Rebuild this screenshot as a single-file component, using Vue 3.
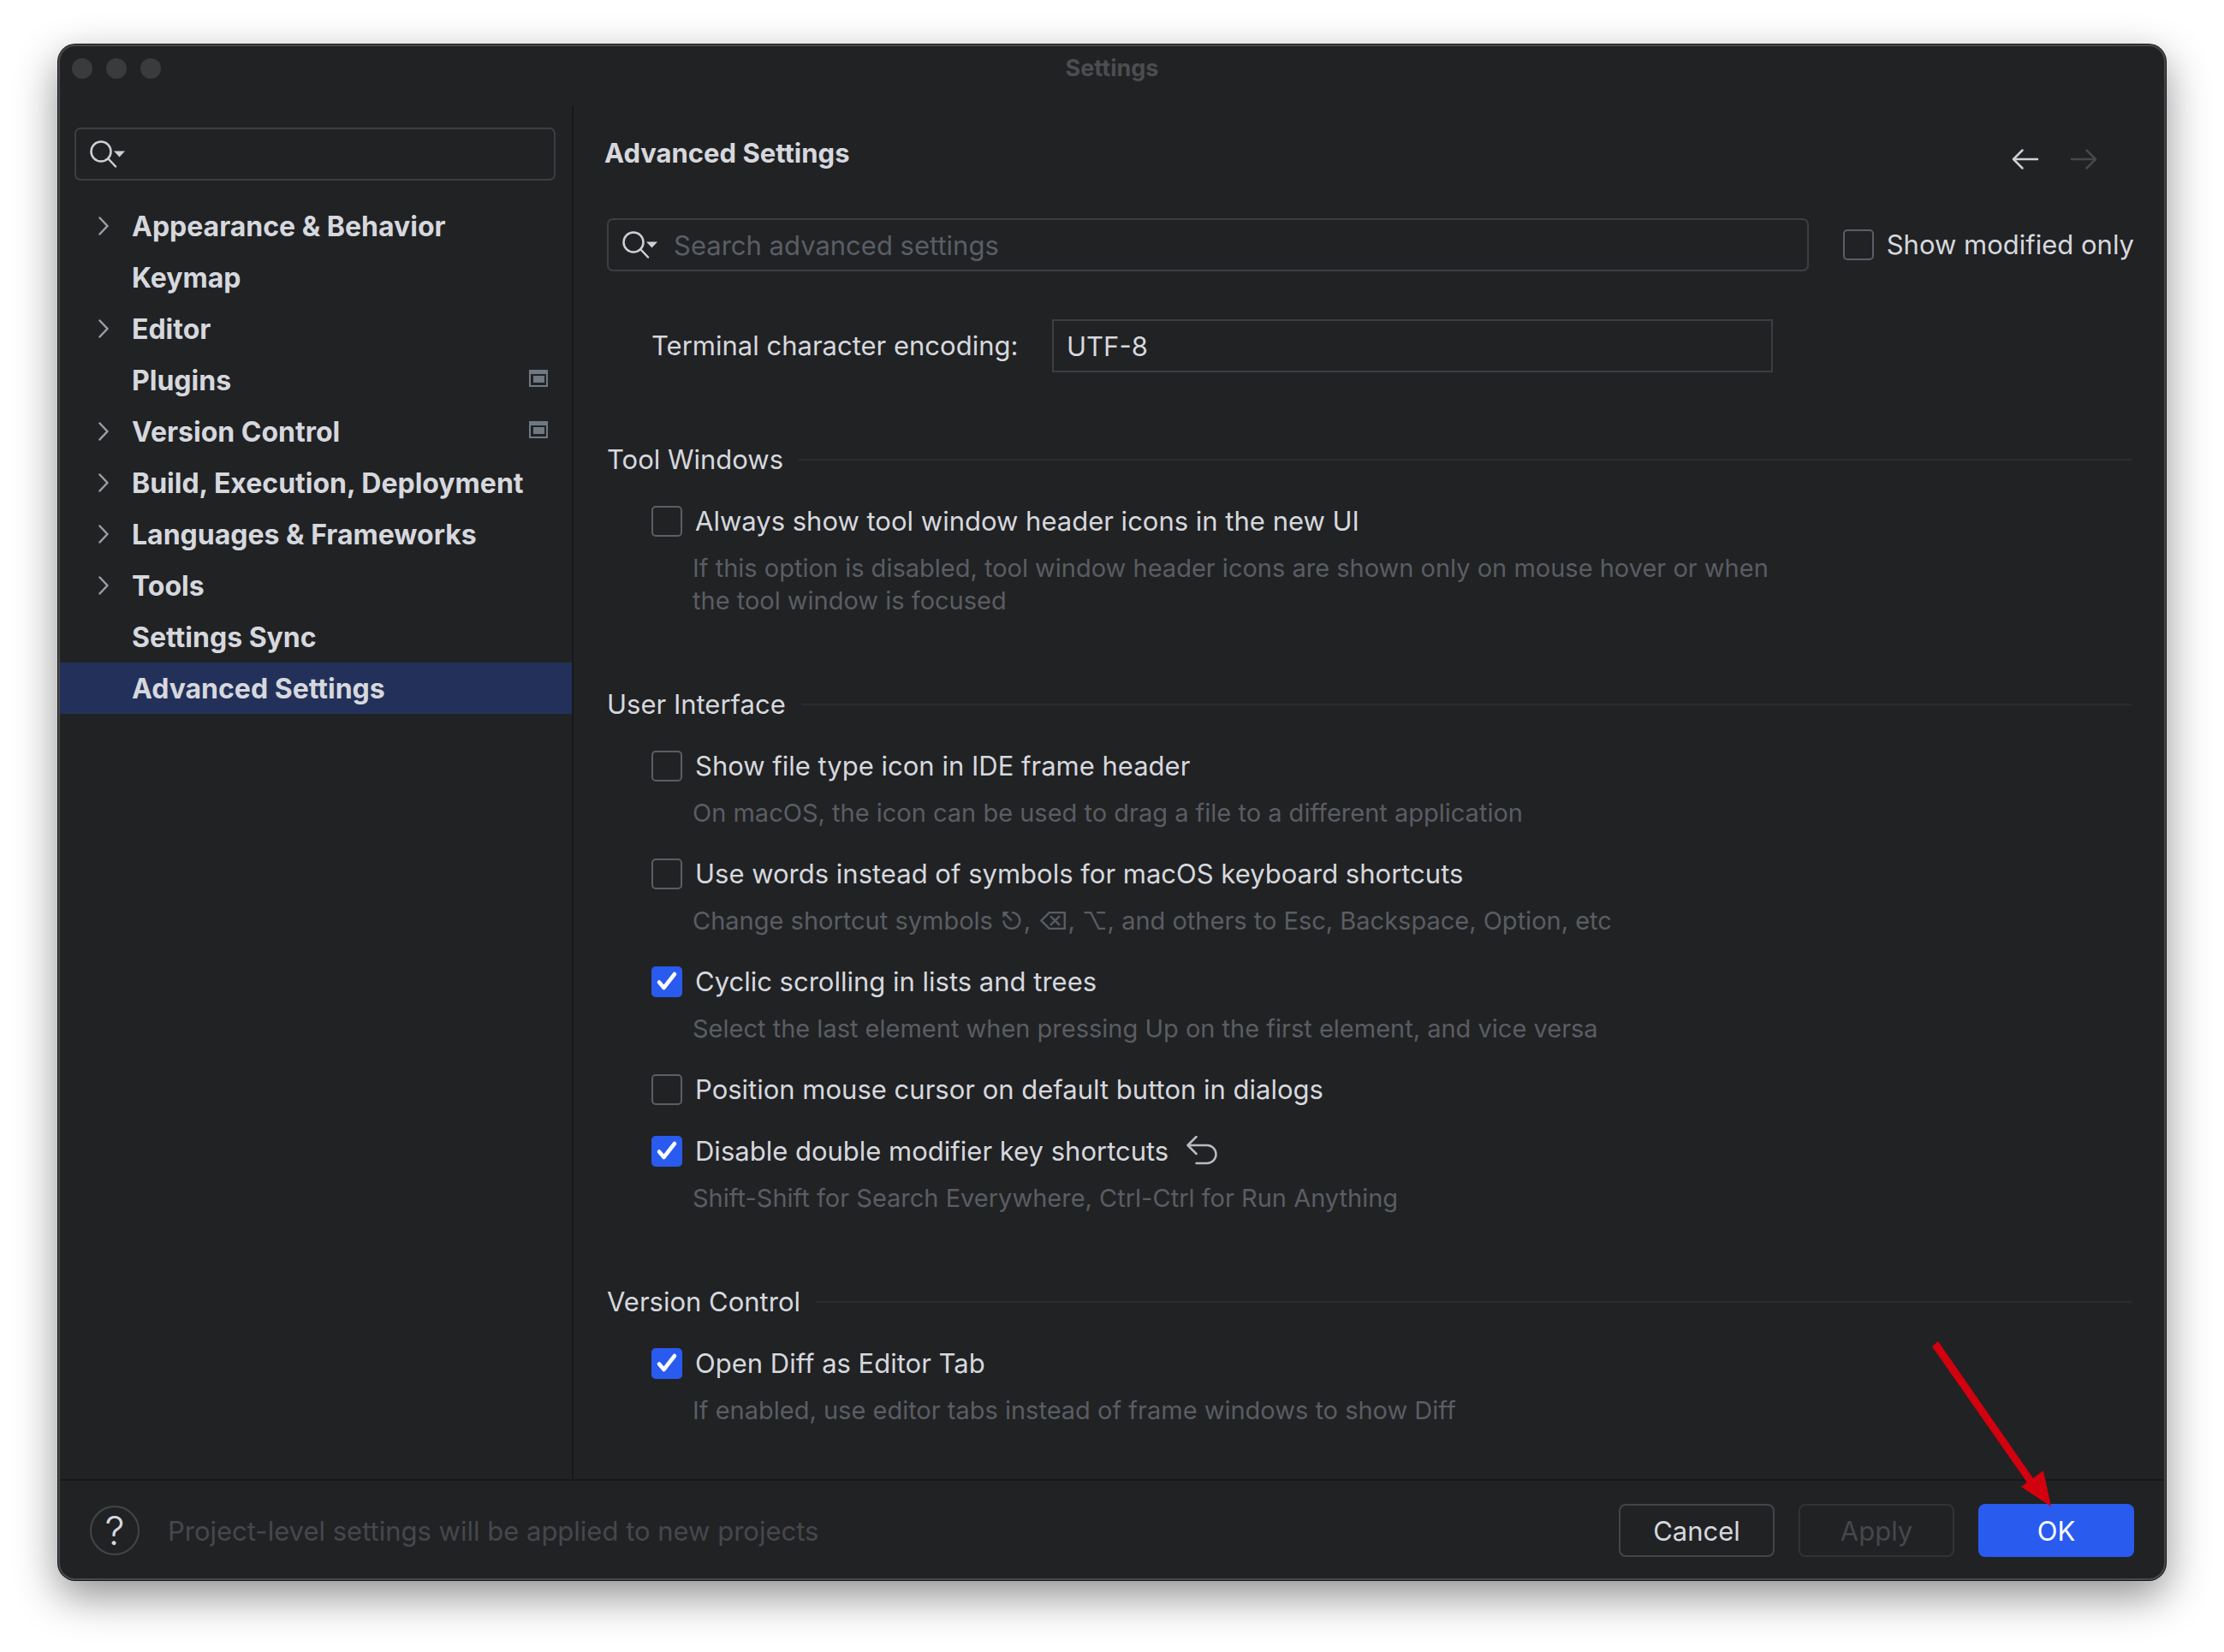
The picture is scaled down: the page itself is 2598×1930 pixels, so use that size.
<script setup>
import { ref } from 'vue'

const tree = [
  { name: 'Appearance & Behavior', expandable: true },
  { name: 'Keymap' },
  { name: 'Editor', expandable: true },
  { name: 'Plugins', badge: true },
  { name: 'Version Control', expandable: true, badge: true },
  { name: 'Build, Execution, Deployment', expandable: true },
  { name: 'Languages & Frameworks', expandable: true },
  { name: 'Tools', expandable: true },
  { name: 'Settings Sync' },
  { name: 'Advanced Settings', selected: true },
]

const groups = ref([
  {
    title: 'Tool Windows',
    options: [
      {
        id: 'header-icons',
        label: 'Always show tool window header icons in the new UI',
        hint: 'If this option is disabled, tool window header icons are shown only on mouse hover or when the tool window is focused',
        on: false,
      },
    ],
  },
  {
    title: 'User Interface',
    options: [
      {
        id: 'file-icon',
        label: 'Show file type icon in IDE frame header',
        hint: 'On macOS, the icon can be used to drag a file to a different application',
        on: false,
      },
      {
        id: 'words',
        label: 'Use words instead of symbols for macOS keyboard shortcuts',
        hint: 'Change shortcut symbols ⎋, ⌫, ⌥, and others to Esc, Backspace, Option, etc',
        on: false,
      },
      {
        id: 'cyclic',
        label: 'Cyclic scrolling in lists and trees',
        hint: 'Select the last element when pressing Up on the first element, and vice versa',
        on: true,
      },
      { id: 'cursor', label: 'Position mouse cursor on default button in dialogs', on: false },
      {
        id: 'double-modifier',
        label: 'Disable double modifier key shortcuts',
        hint: 'Shift-Shift for Search Everywhere, Ctrl-Ctrl for Run Anything',
        on: true,
        modified: true,
      },
    ],
  },
  {
    title: 'Version Control',
    options: [
      {
        id: 'diff-tab',
        label: 'Open Diff as Editor Tab',
        hint: 'If enabled, use editor tabs instead of frame windows to show Diff',
        on: true,
      },
    ],
  },
])

const modifiedOnly = ref(false)
const encoding = ref('UTF-8')
</script>

<template>
  <div class="desktop">
    <div class="window">
      <header class="titlebar">
        <div class="lights"><span></span><span></span><span></span></div>
        <div class="window-title">Settings</div>
      </header>

      <div class="body">
        <aside class="sidebar">
          <label class="search side-search">
            <svg class="search-icon" viewBox="0 0 42 36">
              <circle cx="13" cy="14" r="11.5" />
              <path d="M21.5 22.5 30 31.500" />
              <path class="caret" d="M28 13.500h13l-6.500 7z" />
            </svg>
            <input type="text" aria-label="Search settings" />
          </label>
          <nav class="tree">
            <a
              v-for="item in tree"
              :key="item.name"
              href="#"
              class="tree-row"
              :class="{ selected: item.selected }"
            >
              <svg class="chevron" viewBox="0 0 12 22">
                <path v-if="item.expandable" d="M1.500 1.500 10.500 11l-9 9.500" />
              </svg>
              <span class="tree-name">{{ item.name }}</span>
              <svg v-if="item.badge" class="badge" viewBox="0 0 22 20">
                <path fill-rule="evenodd" d="M0 0h22v20H0zM2 5v13h18V5z" />
                <path d="M5 7h13v8H5z" />
              </svg>
            </a>
          </nav>
        </aside>

        <main class="main">
          <div class="page-head">
            <h1>Advanced Settings</h1>
            <div class="history">
              <button type="button" aria-label="Back">
                <svg viewBox="0 0 32 26"><path d="M30 13H2M12.500 2.500 2 13l10.500 10.500" /></svg>
              </button>
              <button type="button" aria-label="Forward" disabled>
                <svg viewBox="0 0 32 26"><path d="M2 13h28M19.500 2.500 30 13 19.500 23.500" /></svg>
              </button>
            </div>
          </div>

          <div class="filter-row">
            <label class="search main-search">
              <svg class="search-icon" viewBox="0 0 42 36">
                <circle cx="13" cy="14" r="11.5" />
                <path d="M21.5 22.5 30 31.500" />
                <path class="caret" d="M28 13.500h13l-6.500 7z" />
              </svg>
              <input type="text" placeholder="Search advanced settings" />
            </label>
            <label class="check">
              <span class="box">
                <input v-model="modifiedOnly" type="checkbox" />
                <svg v-if="modifiedOnly" viewBox="0 0 36 36"><path d="M9 18.500 14.500 25 27 9" /></svg>
              </span>
              Show modified only
            </label>
          </div>

          <div class="field-row">
            <label for="encoding">Terminal character encoding:</label>
            <input id="encoding" v-model="encoding" type="text" />
          </div>

          <section v-for="group in groups" :key="group.title" class="group">
            <h2>{{ group.title }}</h2>
            <div v-for="option in group.options" :key="option.id" class="option">
              <div class="option-line">
                <label class="check">
                  <span class="box">
                    <input v-model="option.on" type="checkbox" />
                    <svg v-if="option.on" viewBox="0 0 36 36"><path d="M9 18.500 14.500 25 27 9" /></svg>
                  </span>
                  {{ option.label }}
                </label>
                <button v-if="option.modified" class="reset" type="button" aria-label="Reset">
                  <svg viewBox="0 0 38 36">
                    <path d="M12.500 1 2.500 11l10 10M2.500 11H25a10.500 10.500 0 0 1 0 21H12.500" />
                  </svg>
                </button>
              </div>
              <p v-if="option.hint">{{ option.hint }}</p>
            </div>
          </section>
        </main>
      </div>

      <footer class="footer">
        <button class="help" type="button" aria-label="Help">?</button>
        <span class="note">Project-level settings will be applied to new projects</span>
        <div class="actions">
          <button class="btn" type="button">Cancel</button>
          <button class="btn" type="button" disabled>Apply</button>
          <div class="ok-wrap">
            <button class="btn primary" type="button">OK</button>
            <svg class="pointer" viewBox="0 0 140 194">
              <path d="M4 6 11 0 122 160 134 151 143 193 108 170 115 165z" />
            </svg>
          </div>
        </div>
      </footer>
    </div>
  </div>
</template>

<style>
body {
  margin: 0;
  background: #fff;
}
</style>

<style scoped>
* {
  box-sizing: border-box;
}

.desktop {
  display: flex;
  min-height: 100vh;
  padding: 52px 68px 84px;
  overflow: hidden;
  background: #fff;
  color: #d6d8de;
  font: 400 31px/40px Inter, 'Liberation Sans', sans-serif;
}

.window {
  flex: 1;
  min-width: 0;
  display: flex;
  flex-direction: column;
  border: 2px solid #48494b;
  border-radius: 20px;
  background: #212224;
  box-shadow: 0 0 0 1px #141516, 0 18px 50px rgba(0, 0, 0, 0.45);
}

button,
input {
  margin: 0;
  padding: 0;
  border: 0;
  background: none;
  color: inherit;
  font: inherit;
  outline: none;
}

svg {
  display: block;
  flex: none;
  fill: none;
  stroke-linecap: round;
  stroke-linejoin: round;
}

/* Title bar */
.titlebar {
  display: grid;
  grid-template-columns: 1fr auto 1fr;
  height: 70px;
  padding: 14px 14px 0;
}

.lights {
  display: flex;
  gap: 16px;
}

.lights span {
  width: 24px;
  height: 24px;
  border-radius: 50%;
  background: #3a3b3d;
}

.window-title {
  color: #4c4d50;
  font-size: 27px;
  font-weight: 700;
  line-height: 24px;
}

/* Sidebar */
.body {
  flex: 1;
  display: flex;
}

.sidebar {
  flex: none;
  width: 600px;
  padding-top: 25px;
  border-right: 2px solid #17181a;
}

.search {
  display: flex;
  align-items: center;
  gap: 18px;
  height: 62px;
  padding: 2px 16px 0;
  border: 2px solid #3c3e44;
  border-radius: 7px;
}

.search input {
  flex: 1;
  min-width: 0;
}

.search input::placeholder {
  color: #5a5e65;
  opacity: 1;
}

.search-icon {
  width: 42px;
  height: 36px;
  stroke: #ced0d6;
  stroke-width: 2.5;
}

.caret {
  fill: #ced0d6;
  stroke: none;
}

.side-search {
  margin: 0 19px 23px 17px;
}

.tree-row {
  display: flex;
  align-items: center;
  height: 60px;
  padding: 0 28px 0 45px;
  color: inherit;
  font-size: 32px;
  font-weight: 700;
  text-decoration: none;
  white-space: nowrap;
}

.tree-row.selected {
  background: #23315a;
}

.chevron {
  width: 12px;
  height: 22px;
  margin-right: 27px;
  stroke: #9b9ea6;
  stroke-width: 2.5;
}

.tree-name {
  flex: 1;
  padding-top: 2px;
}

.badge {
  width: 22px;
  height: 20px;
  margin-bottom: 4px;
  fill: #6f7982;
}

/* Page */
.main {
  flex: 1;
  min-width: 0;
  padding: 35px 38px 0 39px;
}

.page-head {
  display: flex;
  justify-content: space-between;
  margin: 0 40px 56px -3px;
}

h1,
h2,
p {
  margin: 0;
  font-size: inherit;
  font-weight: inherit;
}

h1 {
  font-weight: 700;
}

.history {
  display: flex;
  gap: 36px;
  padding-top: 14px;
}

.history svg {
  width: 32px;
  height: 26px;
  stroke: #ced0d6;
  stroke-width: 2.5;
}

.history button:disabled svg {
  stroke: #46484b;
}

.filter-row {
  display: flex;
  align-items: center;
  gap: 40px;
  margin-right: -3px;
}

.main-search {
  flex: 1;
}

.check {
  display: flex;
  align-items: center;
  gap: 15px;
  height: 36px;
  white-space: nowrap;
}

.box {
  display: grid;
  width: 36px;
  height: 36px;
}

.box > * {
  grid-area: 1 / 1;
  width: 36px;
  height: 36px;
}

.box input {
  appearance: none;
  border: 2px solid #5a5e65;
  border-radius: 5px;
}

.box input:checked {
  border-color: #2a5bef;
  background: #2a5bef;
}

.box svg {
  pointer-events: none;
  stroke: #fff;
  stroke-width: 4.5;
}

.field-row {
  display: flex;
  align-items: center;
  margin: 56px 419px 84px 52px;
}

.field-row label {
  width: 468px;
  white-space: nowrap;
}

.field-row input {
  flex: 1;
  min-width: 0;
  height: 62px;
  padding: 0 15px;
  border: 2px solid #3c3e44;
}

.group {
  display: flex;
  flex-direction: column;
  gap: 36px;
  margin-bottom: 86px;
}

.group:last-child {
  margin-bottom: 0;
}

h2 {
  display: flex;
  align-items: center;
  gap: 18px;
  height: 36px;
}

h2::after {
  content: '';
  flex: 1;
  height: 2px;
  background: #2b2c2f;
}

.option {
  padding-left: 52px;
}

.option-line {
  display: flex;
  align-items: center;
  gap: 20px;
  height: 36px;
}

.option p {
  max-width: 1330px;
  margin: 18px 0 -2px;
  padding-left: 48px;
  color: #5a5d63;
  font-size: 29px;
  line-height: 38px;
}

.reset svg {
  width: 38px;
  height: 36px;
  stroke: #b9bbc1;
  stroke-width: 2.5;
}

/* Footer */
.footer {
  display: flex;
  align-items: center;
  padding: 27px 35px 25px;
  border-top: 2px solid #17181a;
}

.help {
  width: 58px;
  height: 58px;
  border: 2px solid #43454a;
  border-radius: 50%;
  font-size: 46px;
  font-weight: 300;
  line-height: 54px;
}

.note {
  flex: 1;
  margin-left: 33px;
  padding-top: 2px;
  color: #46474c;
}

.actions {
  display: flex;
  gap: 28px;
}

.btn {
  width: 182px;
  height: 62px;
  padding-top: 2px;
  border: 2px solid #43454a;
  border-radius: 8px;
}

.btn:disabled {
  border-color: #323337;
  color: #46474c;
}

.btn.primary {
  border-color: #2a5bef;
  background: #2a5bef;
  color: #fff;
}

.ok-wrap {
  position: relative;
}

/* Callout arrow whose tip touches the OK button */
.pointer {
  position: absolute;
  right: 100px;
  bottom: 58px;
  width: 140px;
  height: 194px;
  overflow: visible;
  fill: #d3000f;
  pointer-events: none;
}
</style>
